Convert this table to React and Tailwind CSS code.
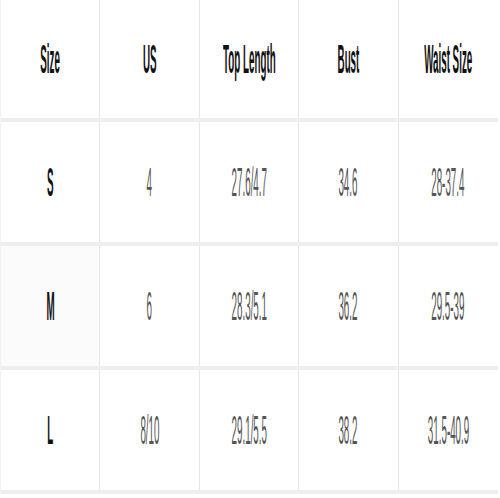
import React from "react";

const header = ["Size", "US", "Top Length", "Bust", "Waist Size"];
const rows = [
  ["S", "4", "27.6/4.7", "34.6", "28-37.4"],
  ["M", "6", "28.3/5.1", "36.2", "29.5-39"],
  ["L", "8/10", "29.1/5.5", "38.2", "31.5-40.9"],
];

function Cell({ children, bold, last, shade }) {
  return (
    <div
      className={
        "flex h-full items-center justify-center overflow-hidden " +
        (last ? "" : "border-r border-[#e6e6e6] ") +
        (shade ? "bg-[#fbfbfb]" : "")
      }
    >
      <span
        className={
          "inline-block whitespace-nowrap text-[40px] leading-none scale-x-[0.245] " +
          (bold ? "font-bold text-[#111]" : "font-normal text-[#555555]")
        }
        style={{ fontFamily: '"Liberation Sans", Arial, sans-serif' }}
      >
        {children}
      </span>
    </div>
  );
}

export default function App() {
  return (
    <div className="h-[498px] w-[500px] bg-white">
      <div className="w-[498px] border-l border-[#f2f2f2]">
        <div className="grid h-[122px] grid-cols-5 border-b-4 border-[#eeeeee]">
          {header.map((h, i) => (
            <Cell key={h} bold last={i === 4}>
              {h}
            </Cell>
          ))}
        </div>
        {rows.map((r, ri) => (
          <div
            key={ri}
            className="grid h-[124px] grid-cols-5 border-b-4 border-[#eeeeee]"
          >
            {r.map((c, i) => (
              <Cell key={i} bold={i === 0} last={i === 4} shade={ri === 1 && i === 0}>
                {c}
              </Cell>
            ))}
          </div>
        ))}
      </div>
    </div>
  );
}
